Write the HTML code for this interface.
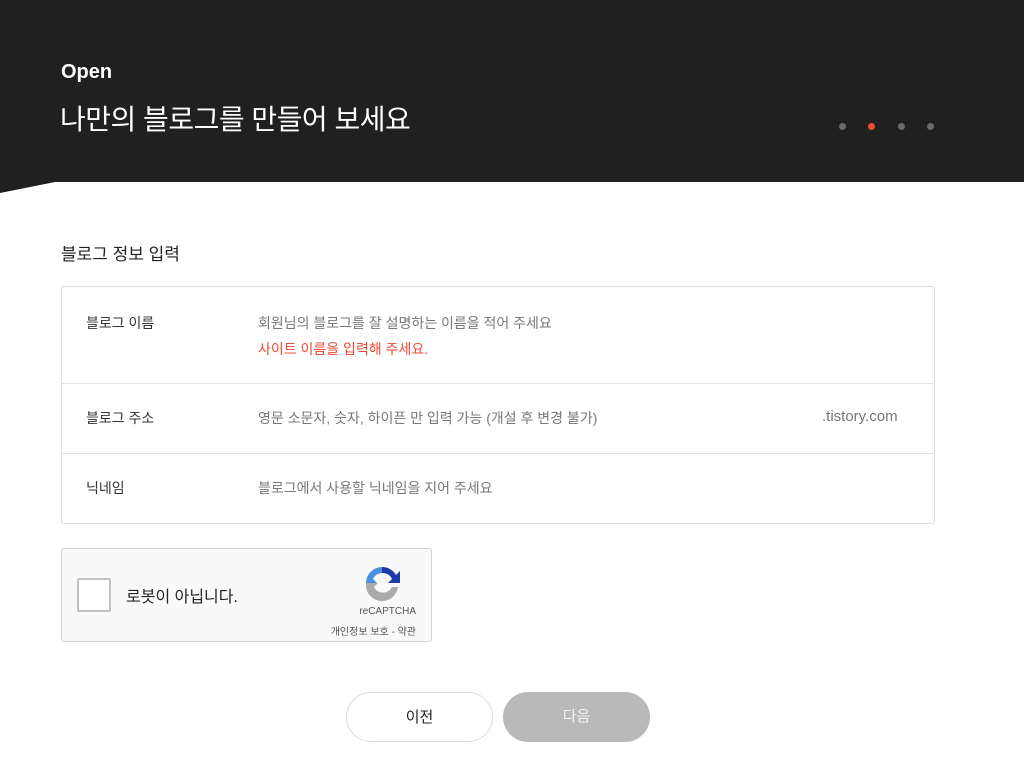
<!DOCTYPE html>
<html><head><meta charset="utf-8"><style>
*{margin:0;padding:0;box-sizing:border-box}
body{width:1024px;height:777px;background:#fff;font-family:"Liberation Sans","Noto Sans CJK KR",sans-serif;position:relative;overflow:hidden;color:#333}
.hd{position:absolute;left:0;top:0;width:1024px;height:182px;background:#202020}
.slant{position:absolute;left:0;top:181px;width:60px;height:14px}
.open{position:absolute;left:61px;top:61px;color:#fff;font-weight:bold;font-size:20px}
.title{position:absolute;left:60px;top:98px;color:#fff;font-size:28px;letter-spacing:-0.5px}
.dot{position:absolute;top:123px;width:7px;height:7px;border-radius:50%;background:#6b6b6b}
.sec{position:absolute;left:61px;top:240px;font-size:17px;color:#222}
.box{position:absolute;left:61px;top:286px;width:874px;height:238px;border:1px solid #dcdcdc;border-radius:3px}
.row{position:absolute;left:0;width:872px;border-bottom:1px solid #e2e2e2}
.lbl{position:absolute;left:24px;font-size:14px;color:#333}
.ph{position:absolute;left:196px;font-size:14px;color:#777}
.cap{position:absolute;left:61px;top:548px;width:371px;height:94px;background:#f9f9f9;border:1px solid #d3d3d3;border-radius:3px}
.cb{position:absolute;left:15px;top:29px;width:34px;height:34px;background:#fff;border:2px solid #c1c1c1;border-radius:2px}
.btn{position:absolute;top:692px;width:147px;height:50px;border-radius:25px;font-size:15px;text-align:center;line-height:50px}
</style></head><body>
<div class="hd"></div>
<svg class="slant" viewBox="0 0 60 14"><polygon points="0,0 60,0 0,12" fill="#202020"/></svg>
<div class="open">Open</div>
<div class="title">나만의 블로그를 만들어 보세요</div>
<div class="dot" style="left:839px"></div>
<div class="dot" style="left:868px;background:#f04a36"></div>
<div class="dot" style="left:898px"></div>
<div class="dot" style="left:927px"></div>
<div class="sec">블로그 정보 입력</div>
<div class="box">
 <div class="row" style="top:0;height:97px">
  <div class="lbl" style="top:26px">블로그 이름</div>
  <div class="ph" style="top:26px">회원님의 블로그를 잘 설명하는 이름을 적어 주세요</div>
  <div class="ph" style="top:52px;color:#f04a36">사이트 이름을 입력해 주세요.</div>
 </div>
 <div class="row" style="top:97px;height:70px">
  <div class="lbl" style="top:24px">블로그 주소</div>
  <div class="ph" style="top:24px">영문 소문자, 숫자, 하이픈 만 입력 가능 (개설 후 변경 불가)</div>
  <div class="ph" style="top:24px;left:760px;font-size:15px">.tistory.com</div>
 </div>
 <div class="row" style="top:167px;height:70px;border:none">
  <div class="lbl" style="top:24px">닉네임</div>
  <div class="ph" style="top:24px">블로그에서 사용할 닉네임을 지어 주세요</div>
 </div>
</div>
<div class="cap">
 <div class="cb"></div>
 <div style="position:absolute;left:64px;top:34px;font-size:16px;color:#222">로봇이 아닙니다.</div>
 <svg style="position:absolute;left:300px;top:14px" width="40" height="40" viewBox="0 0 40 40">
  <path d="M20 4a16 16 0 0 1 14 8l4-4v12H26l4-4a10 10 0 0 0-10-6z" fill="#1c3aa9"/>
  <path d="M4 20A16 16 0 0 1 20 4v6a10 10 0 0 0-9 6l4 4H4z" fill="#4a90e2"/>
  <path d="M4 20h12l-4 4a10 10 0 0 0 18 0h6A16 16 0 0 1 4 20z" fill="#ababab"/>
 </svg>
 <div style="position:absolute;right:15px;top:57px;font-size:10px;color:#555">reCAPTCHA</div>
 <div style="position:absolute;right:15px;top:74px;font-size:10px;color:#555">개인정보 보호 - 약관</div>
</div>
<div class="btn" style="left:346px;border:1px solid #dcdcdc;color:#222;background:#fff">이전</div>
<div class="btn" style="left:503px;background:#b9b9b9;color:#f2f2f2">다음</div>
</body></html>
